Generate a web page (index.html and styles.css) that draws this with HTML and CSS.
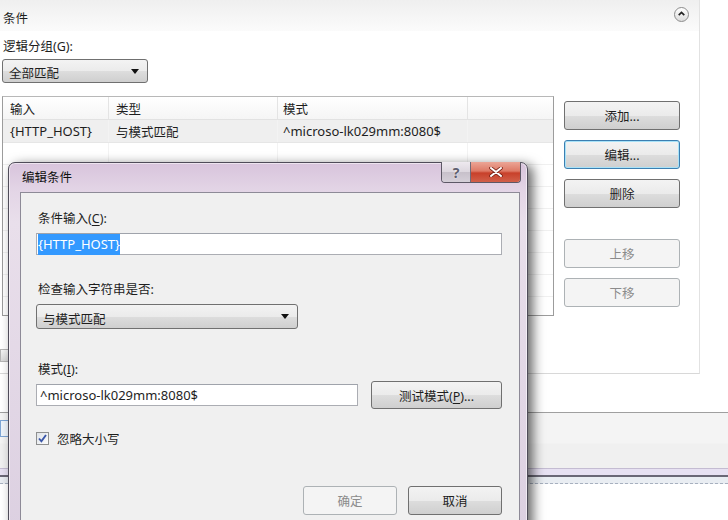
FILE: index.html
```html
<!DOCTYPE html>
<html lang="zh-CN">
  <head>
    <meta charset="UTF-8" />
    <title>编辑条件</title>
    <link rel="stylesheet" href="styles.css">
  </head>
  <body>
    <div class="panel">
      <div class="panel-head">
        <span>条件</span>
        <span class="collapse">
          <svg width="14" height="14" viewBox="0 0 14 14">
            <path d="M4 8.3 L7 5.3 L10 8.3" fill="none" stroke="#222" stroke-width="1.8" />
          </svg>
        </span>
      </div>
      <div class="panel-body">
        <div class="label">逻辑分组(G):</div>
        <div class="select group-select">全部匹配<span class="arrow"></span></div>
        <div class="list-row">
          <div class="grid">
            <div class="grid-head">
              <div class="c1">输入</div>
              <div class="c2">类型</div>
              <div class="c3">模式</div>
              <div class="c4"></div>
            </div>
            <div class="grid-row current">
              <div class="c1 latin">{HTTP_HOST}</div>
              <div class="c2">与模式匹配</div>
              <div class="c3 latin">^microso-lk029mm:8080$</div>
              <div class="c4"></div>
            </div>
            <div class="grid-row"><div class="c1"></div><div class="c2"></div><div class="c3"></div><div class="c4"></div></div>
            <div class="grid-row"><div class="c1"></div><div class="c2"></div><div class="c3"></div><div class="c4"></div></div>
            <div class="grid-row"><div class="c1"></div><div class="c2"></div><div class="c3"></div><div class="c4"></div></div>
            <div class="grid-row"><div class="c1"></div><div class="c2"></div><div class="c3"></div><div class="c4"></div></div>
            <div class="grid-row"><div class="c1"></div><div class="c2"></div><div class="c3"></div><div class="c4"></div></div>
            <div class="grid-row"><div class="c1"></div><div class="c2"></div><div class="c3"></div><div class="c4"></div></div>
            <div class="grid-row"><div class="c1"></div><div class="c2"></div><div class="c3"></div><div class="c4"></div></div>
          </div>
          <div class="side-buttons">
            <button class="btn">添加...</button>
            <button class="btn focused">编辑...</button>
            <button class="btn">删除</button>
            <button class="btn disabled move-up">上移</button>
            <button class="btn disabled">下移</button>
          </div>
        </div>
        <div class="tiny-box"></div>
      </div>
    </div>

    <div class="spacer"></div>
    <div class="band">
      <span class="band-check"></span><span class="band-text">1</span>
    </div>
    <div class="lavender"></div>
    <div class="dashed"></div>

    <!-- 编辑条件 对话框 -->
    <div class="dialog">
      <div class="dialog-title">编辑条件</div>
      <div class="caption-buttons">
        <span class="cap-help">?</span>
        <span class="cap-close">
          <svg width="14" height="10" viewBox="0 0 14 10">
            <path d="M2 1 L12 9 M12 1 L2 9" stroke="#7a2418" stroke-width="3.6" stroke-linecap="round" />
            <path d="M2 1 L12 9 M12 1 L2 9" stroke="#fff" stroke-width="2" stroke-linecap="round" />
          </svg>
        </span>
      </div>
      <div class="client">
        <div class="label first">条件输入(<u>C</u>):</div>
        <div class="input latin"><span class="selected">{HTTP_HOST}</span></div>

        <div class="label second">检查输入字符串是否:</div>
        <div class="select match-select">与模式匹配<span class="arrow"></span></div>

        <div class="label third">模式(<u>I</u>):</div>
        <div class="pattern-row">
          <div class="input pattern-input latin">^microso-lk029mm:8080$</div>
          <button class="btn test-btn">测试模式(<u>P</u>)...</button>
        </div>

        <div class="check-row">
          <span class="checkbox">
            <svg width="11" height="11" viewBox="0 0 11 11">
              <path d="M2 5.5 L4.4 8.3 L9 2" fill="none" stroke="#3a56a8" stroke-width="1.9" />
            </svg>
          </span>
          <span>忽略大小写</span>
        </div>

        <div class="dialog-buttons">
          <button class="btn disabled">确定</button>
          <button class="btn">取消</button>
        </div>
      </div>
    </div>
  </body>
</html>
```

FILE: styles.css
```css
* {
  box-sizing: border-box;
}

body {
  margin: 0;
  width: 728px;
  height: 520px;
  overflow: hidden;
  position: relative;
  background: #fff;
  font-family: "Noto Sans", "Noto Sans CJK SC", sans-serif;
  font-size: 12.5px;
  color: #1e1e1e;
}

u {
  text-decoration: underline;
  text-underline-offset: 2px;
}

.latin {
  font-size: 13px;
}

/* ---- main panel ---- */
.panel {
  width: 700px;
  height: 374px;
  border-right: 1px solid #e2e2e2;
  border-bottom: 1px solid #d8d8d8;
  background: #fff;
}

.panel-head {
  height: 31px;
  display: flex;
  align-items: center;
  justify-content: space-between;
  padding: 4px 10px 0 3px;
  background: linear-gradient(#efefef, #fbfbfb);
}

.collapse {
  width: 15px;
  height: 15px;
  margin-top: -7px;
  border: 1px solid #8c8c8c;
  border-radius: 50%;
  background: linear-gradient(#ffffff, #dcdcdc);
  display: flex;
  align-items: center;
  justify-content: center;
}

.panel-body {
  padding-left: 2px;
}

.label {
  line-height: 16px;
  margin-top: 8px;
  padding-left: 1px;
}

.select {
  position: relative;
  height: 24px;
  margin-top: 4px;
  padding: 3px 0 0 6px;
  border: 1px solid #707070;
  border-radius: 3px;
  background: linear-gradient(#f3f3f3 0%, #ebebeb 50%, #dddddd 51%, #cfcfcf 100%);
}

.group-select {
  width: 146px;
}

.arrow {
  position: absolute;
  right: 8px;
  top: 9px;
  border-left: 4px solid transparent;
  border-right: 4px solid transparent;
  border-top: 5px solid #111;
}

.list-row {
  display: flex;
  margin-top: 13px;
}

.grid {
  width: 552px;
  height: 220px;
  border: 1px solid #9c9c9c;
  border-top-color: #b8b8b8;
  overflow: hidden;
}

.grid-head,
.grid-row {
  display: flex;
}

.grid-head {
  height: 23px;
  background: linear-gradient(#ffffff, #f5f5f5);
  border-bottom: 1px solid #e2e2e2;
}

.grid-row {
  height: 22px;
  border-bottom: 1px solid #f0f0f0;
}

.grid-row.current {
  height: 23px;
  background: #efefef;
  border-bottom-color: #e6e6e6;
}

.grid-head > div,
.grid-row > div {
  display: flex;
  align-items: center;
  padding-left: 7px;
}

.c1 { width: 105px; }
.c2 { width: 169px; border-left: 1px solid #e4e4e4; }
.c3 { width: 190px; border-left: 1px solid #e4e4e4; padding-left: 5px !important; }
.c4 { flex: 1; border-left: 1px solid #e4e4e4; }

.grid-row .c2,
.grid-row .c3,
.grid-row .c4 {
  border-left-color: #f3f3f3;
}

.side-buttons {
  display: flex;
  flex-direction: column;
  gap: 10px;
  margin: 5px 0 0 10px;
  width: 116px;
}

.btn {
  height: 29px;
  border: 1px solid #707070;
  border-radius: 3px;
  background: linear-gradient(#f3f3f3 0%, #ebebeb 50%, #dddddd 51%, #cfcfcf 100%);
  font-family: inherit;
  font-size: 12.5px;
  color: #1e1e1e;
  padding: 0;
}

.btn.focused {
  border-color: #3c7fb1;
  box-shadow: inset 0 0 0 1px #a8e2f8;
}

.btn.disabled {
  border-color: #adb2b5;
  background: #f4f4f4;
  color: #8b8b8b;
}

.move-up {
  margin-top: 21px;
}

.tiny-box {
  width: 12px;
  height: 13px;
  margin: 33px 0 0 -2px;
  border: 1px solid #b5b5b5;
  background: linear-gradient(#f4f4f4, #d8d8d8);
}

/* ---- area below the panel ---- */
.spacer {
  height: 38px;
}

.band {
  height: 56px;
  border-top: 1px solid #9f9f9f;
  background: linear-gradient(#f4f4f4 0, #f4f4f4 30px, #f0f0f0 31px, #f0f0f0 100%);
  display: flex;
  align-items: flex-start;
  padding-top: 7px;
}

.band-check {
  width: 13px;
  height: 17px;
  border: 1px solid #7ea6d6;
  background: #eef4fb;
}

.band-text {
  margin-left: 1px;
  line-height: 17px;
}

.lavender {
  height: 9px;
  border-top: 1px solid #c4bcd2;
  border-bottom: 2px solid #6a6876;
  background: #e7e1f2;
}

.dashed {
  height: 7px;
  background: #e9edf2;
  border-bottom: 1px dashed #a7b0bf;
}

/* ---- dialog ---- */
.dialog {
  position: absolute;
  left: 8px;
  top: 162px;
  width: 520px;
  height: 372px;
  display: flex;
  flex-direction: column;
  padding: 0 7px 0 11px;
  border: 1px solid #4f4c59;
  border-radius: 7px 7px 0 0;
  background: linear-gradient(#d8c4dc 0, #e3d5e6 28px, #e9dfeb 60px, #dcd0e1 100%);
  box-shadow: 5px 3px 12px rgba(0, 0, 0, 0.6), inset 0 0 0 1px rgba(255, 255, 255, 0.55);
}

.dialog-title {
  height: 29px;
  display: flex;
  align-items: center;
  padding: 0 0 2px 2px;
  color: #111;
}

.caption-buttons {
  position: absolute;
  top: -1px;
  right: 6px;
  display: flex;
  height: 21px;
  border: 1px solid #5d5866;
  border-top: none;
  border-radius: 0 0 4px 4px;
  overflow: hidden;
}

.cap-help {
  width: 29px;
  display: flex;
  align-items: center;
  justify-content: center;
  border-right: 1px solid #6f6a78;
  background: linear-gradient(#eee9ef 0%, #dcd6de 50%, #c7c0ca 51%, #d5cfd8 100%);
  color: #5e5e6e;
  font-weight: bold;
  font-size: 14px;
  text-shadow: 0 0 2px #fff;
}

.cap-close {
  width: 49px;
  display: flex;
  align-items: center;
  justify-content: center;
  background: linear-gradient(#eba596 0%, #de7a66 45%, #c8402a 55%, #d1604a 100%);
}

.client {
  flex: 1;
  border: 1px solid #8d8a97;
  background: #f0f0f0;
  padding: 0 17px 0 15px;
  display: flex;
  flex-direction: column;
  align-items: flex-start;
}

.client .label {
  padding-left: 2px;
}

.client .label.first {
  margin-top: 18px;
}

.input {
  height: 22px;
  margin-top: 6px;
  padding: 1px 0 0 1px;
  border: 1px solid #abadb3;
  border-top-color: #9fa3ab;
  background: #fff;
  width: 466px;
}

.selected {
  background: #3399ff;
  color: #fff;
  padding: 1px 0 2px;
}

.client .label.second {
  margin-top: 27px;
}

.match-select {
  width: 262px;
  height: 25px;
  margin-top: 6px;
  padding-top: 4px;
}

.client .label.third {
  margin-top: 33px;
}

.pattern-row {
  display: flex;
  align-items: center;
  height: 28px;
  margin-top: 3px;
  width: 466px;
}

.pattern-input {
  width: 322px;
  margin-top: 0;
  padding-left: 3px;
}

.test-btn {
  width: 131px;
  height: 28px;
  margin-left: 13px;
}

.check-row {
  display: flex;
  align-items: center;
  gap: 8px;
  height: 18px;
  margin-top: 20px;
}

.checkbox {
  width: 13px;
  height: 13px;
  border: 1px solid #8e8f8f;
  background: linear-gradient(135deg, #dfe3e8, #fbfbfb);
  display: flex;
  align-items: center;
  justify-content: center;
}

.dialog-buttons {
  display: flex;
  gap: 11px;
  margin-top: 39px;
  width: 466px;
  justify-content: flex-end;
}

.dialog-buttons .btn {
  width: 94px;
}
```
